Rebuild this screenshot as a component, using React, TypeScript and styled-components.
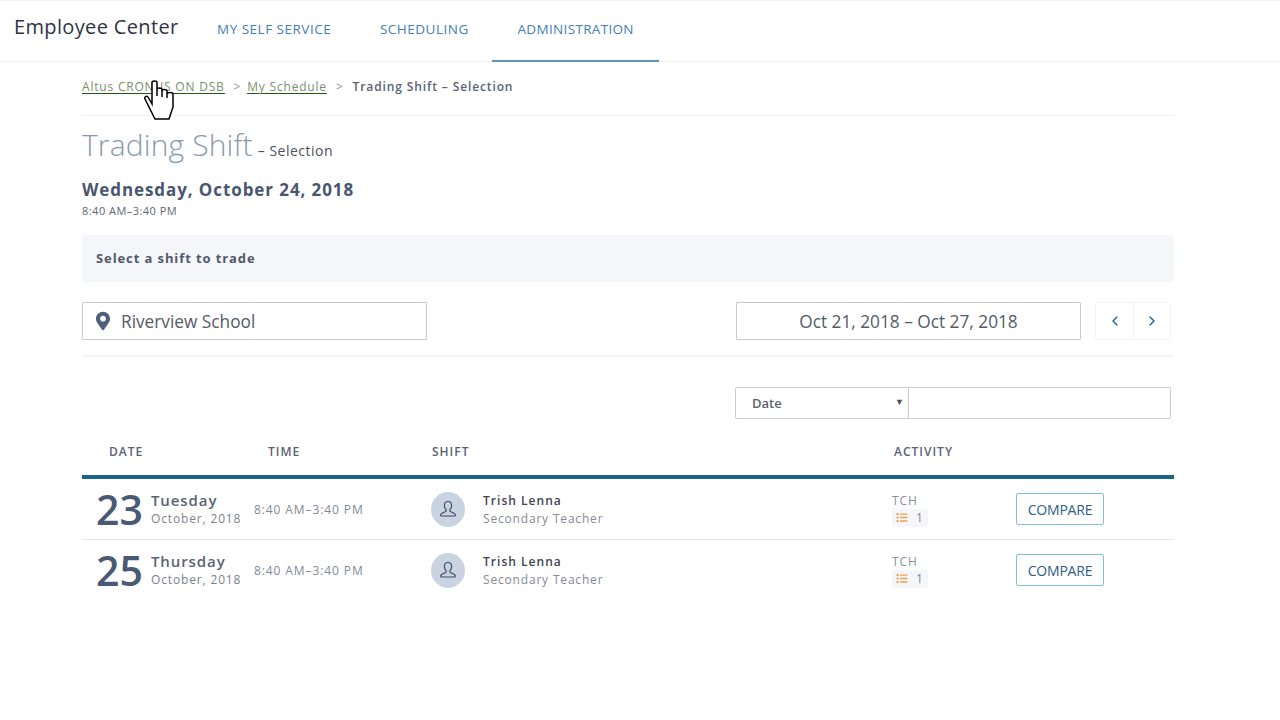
import React from 'react';
import styled, { createGlobalStyle } from 'styled-components';
import { FaList, FaMapMarkerAlt } from 'react-icons/fa';
import { ChevronLeft, ChevronRight } from 'lucide-react';

const GlobalStyle = createGlobalStyle`
  html, body {
    margin: 0;
    padding: 0;
    background: #fff;
    font-family: "Open Sans", "Liberation Sans", sans-serif;
    color: #4a5568;
  }
  * { box-sizing: border-box; }
`;

const Page = styled.div`
  position: relative;
  width: 1280px;
  height: 720px;
  overflow: hidden;
`;

const Header = styled.header`
  display: flex;
  height: 62px;
  border-top: 1px solid #f2f3f5;
  border-bottom: 1px solid #f0f1f4;
  padding-left: 14px;
`;

const Brand = styled.div`
  width: 178px;
  font-size: 20px;
  line-height: 52px;
  letter-spacing: 0.35px;
  color: #2f3542;
  white-space: nowrap;
`;

const Tab = styled.a<{ $active?: boolean }>`
  display: block;
  height: 61px;
  padding: 0 25px;
  font-size: 13.5px;
  line-height: 57px;
  letter-spacing: ${(p) => (p.$active ? '0.33px' : '0.5px')};
  color: #3f80b5;
  white-space: nowrap;
  border-bottom: 2px solid ${(p) => (p.$active ? '#5c93bd' : 'transparent')};
  margin-right: ${(p) => (p.$active ? 0 : '-1.25px')};
`;

const Main = styled.main`
  width: 1092px;
  margin-left: 82px;
`;

const Breadcrumbs = styled.nav`
  display: flex;
  align-items: center;
  height: 54px;
  padding-bottom: 4px;
  border-bottom: 1px solid #f1f2f5;
  font-size: 12px;
  letter-spacing: 0.8px;
`;

const Crumb = styled.a`
  color: #7a8f72;
  border-bottom: 1px solid #1c5c0c;
  line-height: 13px;
  white-space: nowrap;
`;

const CrumbSep = styled.span`
  margin: 0 6px 0 9px;
  color: #8a93a3;
`;

const CrumbCurrent = styled.span`
  margin-left: 3px;
  font-weight: 600;
  color: #5a6372;
  letter-spacing: 0.88px;
`;

const TitleRow = styled.div`
  display: flex;
  align-items: center;
  height: 41px;
  margin-top: 8px;
`;

const Title = styled.h1`
  margin: 0;
  font-size: 30px;
  line-height: 41px;
  font-weight: 300;
  letter-spacing: 0.14px;
  color: #8a9ab0;
`;

const TitleSub = styled.span`
  margin: 11px 0 0 5px;
  font-size: 14px;
  letter-spacing: 0.5px;
  color: #4b5260;
`;

const DayHeading = styled.h2`
  margin: 13px 0 0;
  font-size: 17px;
  line-height: 24px;
  font-weight: 700;
  letter-spacing: 0.91px;
  color: #4a5670;
`;

const DayTime = styled.div`
  margin-top: 2px;
  font-size: 11px;
  line-height: 14px;
  letter-spacing: 0.47px;
  color: #5f6672;
`;

const Banner = styled.div`
  height: 47px;
  margin-top: 17px;
  padding-left: 14px;
  border-radius: 3px;
  background: #f5f6fa;
  font-size: 13px;
  font-weight: 700;
  line-height: 47px;
  letter-spacing: 0.9px;
  color: #515a6b;
`;

const FilterRow = styled.div`
  display: flex;
  align-items: center;
  height: 55px;
  margin-top: 20px;
  padding: 0 3px 15px 0;
  border-bottom: 2px solid #f5f6f8;
`;

const FieldBox = styled.div<{ $centered?: boolean }>`
  display: flex;
  align-items: center;
  justify-content: ${(p) => (p.$centered ? 'center' : 'flex-start')};
  width: 345px;
  height: 38px;
  margin-left: ${(p) => (p.$centered ? 'auto' : 0)};
  padding-left: ${(p) => (p.$centered ? 0 : '13px')};
  border: 1px solid #c6cbd6;
  border-radius: 1px;
  font-size: 17.25px;
  color: #555b66;
  white-space: nowrap;
`;

const PinIcon = styled(FaMapMarkerAlt)`
  width: 14px;
  height: 20px;
  margin-right: 11px;
  color: #4d5f7c;
`;

const Pager = styled.div`
  display: flex;
  height: 38px;
  margin-left: 14px;
  border: 1px solid #f3f4f7;
  border-radius: 2px;
`;

const PagerButton = styled.button`
  display: flex;
  align-items: center;
  justify-content: center;
  width: 37px;
  padding: 0;
  border: 0;
  background: #fff;
  color: #1f5f99;
  & + & { border-left: 1px solid #f3f4f7; }
`;

const SearchRow = styled.div`
  display: flex;
  width: 436px;
  height: 32px;
  margin: 30px 0 0 653px;
`;

const SelectBox = styled.div`
  display: flex;
  align-items: center;
  justify-content: space-between;
  width: 174px;
  padding: 0 4px 0 16px;
  border: 1px solid #c9ccd3;
  border-radius: 2px 0 0 2px;
  font-size: 13px;
  font-weight: 600;
  color: #5b6270;
`;

const Caret = styled.span`
  margin-top: -4px;
  font-size: 9px;
  color: #4b4f57;
`;

const SearchInput = styled.div`
  flex: 1;
  border: 1px solid #c9ccd3;
  border-left: 0;
  border-radius: 0 2px 2px 0;
`;

const TableHead = styled.div`
  display: grid;
  grid-template-columns: 159px 164px 462px 1fr;
  align-items: center;
  height: 60px;
  padding: 9px 0 0 27px;
  border-bottom: 4px solid #1a6488;
  font-size: 12px;
  font-weight: 600;
  letter-spacing: 1px;
  color: #5a6275;
`;

const Row = styled.div`
  display: grid;
  grid-template-columns: 172px 177px 461px 124px 1fr;
  align-items: center;
  height: 61px;
  border-bottom: 1px solid #e3e4e7;
  &:last-child { border-bottom-color: transparent; }
`;

const DateCell = styled.div`
  display: flex;
  align-items: center;
  padding-left: 14px;
`;

const DayNumber = styled.div`
  width: 55px;
  font-size: 41px;
  line-height: 50px;
  font-weight: 600;
  color: #4a5a75;
`;

const DayText = styled.div`
  display: flex;
  flex-direction: column;
  white-space: nowrap;
`;

const Weekday = styled.div`
  font-size: 15px;
  line-height: 19px;
  font-weight: 600;
  letter-spacing: 0.9px;
  color: #5a6372;
`;

const MonthYear = styled.div`
  font-size: 12px;
  line-height: 18px;
  letter-spacing: 0.85px;
  color: #7b818c;
`;

const TimeCell = styled.div`
  font-size: 12px;
  letter-spacing: 0.9px;
  color: #848a95;
  white-space: nowrap;
`;

const ShiftCell = styled.div`
  display: flex;
  align-items: center;
`;

const Avatar = styled.div`
  display: flex;
  align-items: center;
  justify-content: center;
  width: 34px;
  height: 35px;
  margin-right: 18px;
  border-radius: 50%;
  background: #c9d3e2;
  color: #3d4c63;
`;

const PersonText = styled.div`
  display: flex;
  flex-direction: column;
`;

const PersonName = styled.div`
  font-size: 12px;
  line-height: 18px;
  font-weight: 600;
  letter-spacing: 1.03px;
  color: #3e4552;
`;

const PersonRole = styled.div`
  font-size: 12px;
  line-height: 17px;
  letter-spacing: 0.82px;
  color: #858b95;
`;

const ActivityCell = styled.div`
  display: flex;
  flex-direction: column;
  align-items: flex-start;
  padding-top: 1px;
`;

const ActivityCode = styled.div`
  font-size: 12px;
  line-height: 16px;
  letter-spacing: 0.9px;
  color: #8a8f98;
`;

const ActivityBadge = styled.div`
  display: flex;
  align-items: center;
  height: 18px;
  padding: 0 5px 0 4px;
  border-radius: 2px;
  background: #f5f6fa;
  font-size: 12px;
  color: #7f858f;
`;

const ListIcon = styled(FaList)`
  width: 12px;
  height: 11px;
  margin-right: 8px;
  color: #f0a04e;
`;

const CompareButton = styled.button`
  width: 88px;
  height: 32px;
  padding: 0;
  border: 1px solid #80bfe0;
  border-radius: 2px;
  background: #fff;
  font-family: inherit;
  font-size: 14px;
  letter-spacing: -0.2px;
  color: #2f5d88;
`;

const Cursor = styled.svg`
  position: absolute;
  left: 144px;
  top: 80px;
`;

const shifts = [
  { day: '23', weekday: 'Tuesday' },
  { day: '25', weekday: 'Thursday' },
];

const UserGlyph = () => (
  <svg width="18" height="18" viewBox="0 0 18 18" fill="none" stroke="currentColor" strokeWidth="1.2">
    <path d="M9 1.5c-2.3 0-3.6 1.7-3.6 3.9 0 1.6.6 3 1.5 3.9.3.4.3 1.6-.1 2-.8.8-4.6 1.6-5 3.2-.2.8 0 1.5.6 1.5h13.2c.6 0 .8-.7.6-1.5-.4-1.6-4.2-2.4-5-3.2-.4-.4-.4-1.6-.1-2 .9-.9 1.5-2.3 1.5-3.9 0-2.2-1.3-3.9-3.6-3.9z" />
  </svg>
);

const App = () => {
  return (
    <Page>
      <GlobalStyle />
      <Header>
        <Brand>Employee Center</Brand>
        <Tab>MY SELF SERVICE</Tab>
        <Tab>SCHEDULING</Tab>
        <Tab $active>ADMINISTRATION</Tab>
      </Header>
      <Main>
        <Breadcrumbs>
          <Crumb>Altus CRONUS ON DSB</Crumb>
          <CrumbSep>&gt;</CrumbSep>
          <Crumb>My Schedule</Crumb>
          <CrumbSep>&gt;</CrumbSep>
          <CrumbCurrent>Trading Shift – Selection</CrumbCurrent>
        </Breadcrumbs>
        <TitleRow>
          <Title>Trading Shift</Title>
          <TitleSub>– Selection</TitleSub>
        </TitleRow>
        <DayHeading>Wednesday, October 24, 2018</DayHeading>
        <DayTime>8:40 AM–3:40 PM</DayTime>
        <Banner>Select a shift to trade</Banner>
        <FilterRow>
          <FieldBox>
            <PinIcon />
            Riverview School
          </FieldBox>
          <FieldBox $centered>Oct 21, 2018 – Oct 27, 2018</FieldBox>
          <Pager>
            <PagerButton><ChevronLeft size={16} strokeWidth={2} /></PagerButton>
            <PagerButton><ChevronRight size={16} strokeWidth={2} /></PagerButton>
          </Pager>
        </FilterRow>
        <SearchRow>
          <SelectBox>
            Date
            <Caret>▼</Caret>
          </SelectBox>
          <SearchInput />
        </SearchRow>
        <TableHead>
          <span>DATE</span>
          <span>TIME</span>
          <span>SHIFT</span>
          <span>ACTIVITY</span>
        </TableHead>
        {shifts.map((s) => (
          <Row key={s.day}>
            <DateCell>
              <DayNumber>{s.day}</DayNumber>
              <DayText>
                <Weekday>{s.weekday}</Weekday>
                <MonthYear>October, 2018</MonthYear>
              </DayText>
            </DateCell>
            <TimeCell>8:40 AM–3:40 PM</TimeCell>
            <ShiftCell>
              <Avatar><UserGlyph /></Avatar>
              <PersonText>
                <PersonName>Trish Lenna</PersonName>
                <PersonRole>Secondary Teacher</PersonRole>
              </PersonText>
            </ShiftCell>
            <ActivityCell>
              <ActivityCode>TCH</ActivityCode>
              <ActivityBadge>
                <ListIcon />
                1
              </ActivityBadge>
            </ActivityCell>
            <CompareButton>COMPARE</CompareButton>
          </Row>
        ))}
      </Main>
      <Cursor width="32" height="42" viewBox="0 0 32 42">
        <path
          d="M8 2.5C8 .5 13 .5 13 2.5V16V9.5c0-2 5-2 5 0V17V11c0-2 5-2 5 0V18V14c0-2 6-2 6 0V27L25 39H11L1 19c-1-2 2-4 3-2L8 24Z"
          fill="#fff"
          stroke="#000"
          strokeWidth="1.5"
        />
      </Cursor>
    </Page>
  );
};

export default App;
